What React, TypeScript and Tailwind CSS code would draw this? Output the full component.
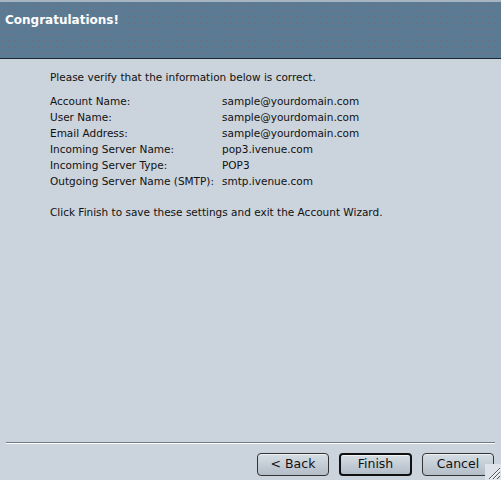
import React from "react";

const rows = [
  ["Account Name:", "sample@yourdomain.com"],
  ["User Name:", "sample@yourdomain.com"],
  ["Email Address:", "sample@yourdomain.com"],
  ["Incoming Server Name:", "pop3.ivenue.com"],
  ["Incoming Server Type:", "POP3"],
  ["Outgoing Server Name (SMTP):", "smtp.ivenue.com"],
];

function WizButton({ label, primary }: { label: string; primary?: boolean }) {
  return (
    <button
      className={
        "h-[23px] rounded-[4px] bg-gradient-to-b from-[#d6dde4] to-[#b3bdc8] text-[12.5px] text-[#111] shadow-[inset_0_1px_0_#eef2f5] " +
        (primary ? "w-[73px] border-2 border-[#111]" : "w-[72px] border border-[#333]")
      }
    >
      {label}
    </button>
  );
}

export default function App() {
  return (
    <div
      className="relative flex h-[480px] w-[501px] flex-col overflow-hidden bg-[#cbd3dc] text-[#111]"
      style={{ fontFamily: '"DejaVu Sans", "Liberation Sans", sans-serif' }}
    >
      {/* header band */}
      <div className="h-[59px] shrink-0 border-t-2 border-b border-t-[#a7b4c2] border-b-[#1c2630] bg-[#5b7b95] bg-[radial-gradient(#7b6a70_0.6px,transparent_0.8px)] bg-[length:6px_6px] pl-[5px] pt-[10px]">
        <div className="text-[12px] font-bold leading-[16px] text-white">Congratulations!</div>
      </div>

      {/* body */}
      <div className="flex-1 pl-[50px] pt-[10px] text-[10.5px] leading-[16px]">
        <div>Please verify that the information below is correct.</div>
        <div className="mt-[8px] grid grid-cols-[172px_1fr]">
          {rows.map(([k, v]) => (
            <React.Fragment key={k}>
              <div>{k}</div>
              <div>{v}</div>
            </React.Fragment>
          ))}
        </div>
        <div className="mt-[15px]">Click Finish to save these settings and exit the Account Wizard.</div>
      </div>

      {/* footer */}
      <div className="h-[38px] shrink-0">
        <div className="mx-[6px] h-[2px] border-t border-b border-t-[#6e7986] border-b-white" />
        <div className="mt-[9px] flex justify-end gap-[10px] pr-[7px]">
          <WizButton label="< Back" />
          <WizButton label="Finish" primary />
          <WizButton label="Cancel" />
        </div>
      </div>

      {/* resize grip */}
      <svg className="absolute bottom-0 right-0" width="16" height="16" viewBox="0 0 16 16">
        <rect x="0" y="0" width="16" height="16" fill="#dde3e8" />
        <path d="M4 15 L15 4 M8 15 L15 8 M12 15 L15 12" stroke="#555" strokeWidth="1" />
        <path d="M5 15 L15 5 M9 15 L15 9" stroke="#fff" strokeWidth="1" />
      </svg>
    </div>
  );
}
